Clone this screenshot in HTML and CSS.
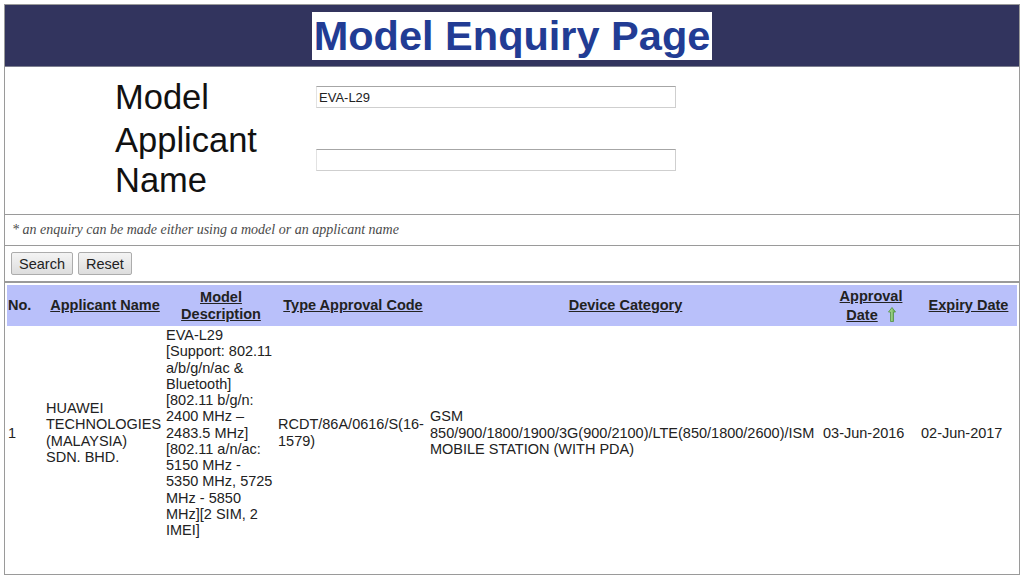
FILE: index.html
```html
<!DOCTYPE html>
<html lang="en">
<head>
<meta charset="utf-8">
<title>Model Enquiry Page</title>
<link rel="stylesheet" href="styles.css">
</head>
<body>
<div class="page">
  <header class="banner">
    <h1 class="title">Model Enquiry Page</h1>
  </header>

  <section class="form">
    <div class="field">
      <label class="label" for="model">Model</label>
      <input class="input" id="model" type="text" value="EVA-L29">
    </div>
    <div class="field">
      <label class="label" for="applicant">Applicant Name</label>
      <input class="input" id="applicant" type="text" value="">
    </div>
  </section>

  <p class="note">* an enquiry can be made either using a model or an applicant name</p>

  <div class="actions">
    <button class="btn" type="button">Search</button>
    <button class="btn" type="button">Reset</button>
  </div>

  <div class="results">
    <table class="grid">
      <colgroup>
        <col class="c-no">
        <col class="c-app">
        <col class="c-desc">
        <col class="c-code">
        <col class="c-cat">
        <col class="c-appr">
        <col class="c-exp">
      </colgroup>
      <thead>
        <tr>
          <th class="th-no">No.</th>
          <th><a href="#">Applicant Name</a></th>
          <th><a href="#">Model Description</a></th>
          <th><a href="#">Type Approval Code</a></th>
          <th><a href="#">Device Category</a></th>
          <th class="th-appr"><a href="#">Approval Date</a> <svg class="sort" width="8" height="15" viewBox="0 0 8 15" aria-hidden="true"><defs><linearGradient id="g" x1="0" y1="0" x2="1" y2="0"><stop offset="0" stop-color="#bfe6a8"/><stop offset="1" stop-color="#5fa84a"/></linearGradient></defs><polygon points="4,0.5 7.5,5 5.5,5 5.5,14.5 2.5,14.5 2.5,5 0.5,5" fill="url(#g)" stroke="#4f8f3f" stroke-width="0.8"/></svg></th>
          <th><a href="#">Expiry Date</a></th>
        </tr>
      </thead>
      <tbody>
        <tr>
          <td>1</td>
          <td>HUAWEI TECHNOLOGIES (MALAYSIA) SDN. BHD.</td>
          <td>EVA-L29 [Support: 802.11 a/b/g/n/ac &amp; Bluetooth] [802.11 b/g/n: 2400 MHz – 2483.5 MHz] [802.11 a/n/ac: 5150 MHz - 5350 MHz, 5725 MHz - 5850 MHz][2 SIM, 2 IMEI]</td>
          <td>RCDT/86A/0616/S(16-1579)</td>
          <td>GSM 850/900/1800/1900/3G(900/2100)/LTE(850/1800/2600)/ISM MOBILE STATION (WITH PDA)</td>
          <td>03-Jun-2016</td>
          <td>02-Jun-2017</td>
        </tr>
      </tbody>
    </table>
  </div>
</div>
</body>
</html>
```

FILE: styles.css
```css
html, body {
  margin: 0;
  padding: 0;
  background: #ffffff;
}

body {
  padding: 4px;
  font-family: "Liberation Sans", Arial, sans-serif;
  color: #222;
}

.page {
  width: 1016px;
  height: 571px;
  box-sizing: border-box;
  border: 1px solid #9a9a9a;
  display: flex;
  flex-direction: column;
}

/* banner */
.banner {
  height: 61px;
  flex: 0 0 auto;
  background: #32345e;
  border-bottom: 1px solid #7d7f90;
  display: flex;
  align-items: center;
  justify-content: center;
}

.title {
  margin: 0;
  padding: 0 2px;
  background: #ffffff;
  color: #223c94;
  font-size: 41.5px;
  line-height: 48px;
  font-weight: bold;
  font-family: "Liberation Sans", Arial, sans-serif;
}

/* form */
.form {
  flex: 0 0 auto;
  height: 148px;
  box-sizing: border-box;
  padding: 10px 0 0 110px;
  border-bottom: 1px solid #9a9a9a;
  display: flex;
  flex-direction: column;
  gap: 3px;
}

.field {
  display: grid;
  grid-template-columns: 201px 360px;
  align-items: center;
}

.label {
  font-size: 34.5px;
  line-height: 40px;
  color: #111;
}

.input {
  width: 360px;
  height: 22px;
  box-sizing: border-box;
  margin: 0;
  padding: 0 2px;
  border: 1px solid #cfcfcf;
  border-top-color: #a6a6a6;
  border-left-color: #e2e2e2;
  font-family: "Liberation Sans", Arial, sans-serif;
  font-size: 13px;
  color: #222;
  background: #fff;
}

/* note */
.note {
  flex: 0 0 auto;
  margin: 0;
  height: 31px;
  box-sizing: border-box;
  padding: 0 7px;
  line-height: 30px;
  border-bottom: 1px solid #9a9a9a;
  font-family: "Liberation Serif", "Times New Roman", serif;
  font-style: italic;
  font-size: 14px;
  color: #4a4a4a;
}

/* buttons */
.actions {
  flex: 0 0 auto;
  height: 37px;
  box-sizing: border-box;
  padding: 6px 6px 0;
  border-bottom: 2px solid #9a9a9a;
  display: flex;
  gap: 5px;
  align-items: flex-start;
}

.btn {
  height: 23px;
  margin: 0;
  padding: 0 7px;
  border: 1px solid #acacac;
  border-radius: 2px;
  background: linear-gradient(#f4f4f4, #dddddd);
  font-family: "Liberation Sans", Arial, sans-serif;
  font-size: 14.5px;
  color: #222;
}

/* results */
.results {
  flex: 1 1 auto;
  padding: 2px 2px 0;
}

.grid {
  width: 1010px;
  table-layout: fixed;
  border-collapse: collapse;
  font-family: "Liberation Sans", Arial, sans-serif;
  font-size: 14.5px;
  line-height: 16.25px;
  color: #222;
}

.c-no { width: 38px; }
.c-app { width: 120px; }
.c-desc { width: 112px; }
.c-code { width: 152px; }
.c-cat { width: 393px; }
.c-appr { width: 98px; }
.c-exp { width: 97px; }

.grid thead tr {
  background: #b9c0fa;
}

.grid th {
  height: 41px;
  box-sizing: border-box;
  padding: 1px;
  font-weight: bold;
  text-align: center;
  vertical-align: middle;
}

.grid th.th-no {
  text-align: left;
}

.grid th.th-appr {
  line-height: 19px;
}

.grid th a {
  color: #222;
  text-decoration: underline;
}

.sort {
  margin-left: 6px;
  vertical-align: -2px;
}

.grid td {
  padding: 1px;
  vertical-align: middle;
  text-align: left;
}
```
